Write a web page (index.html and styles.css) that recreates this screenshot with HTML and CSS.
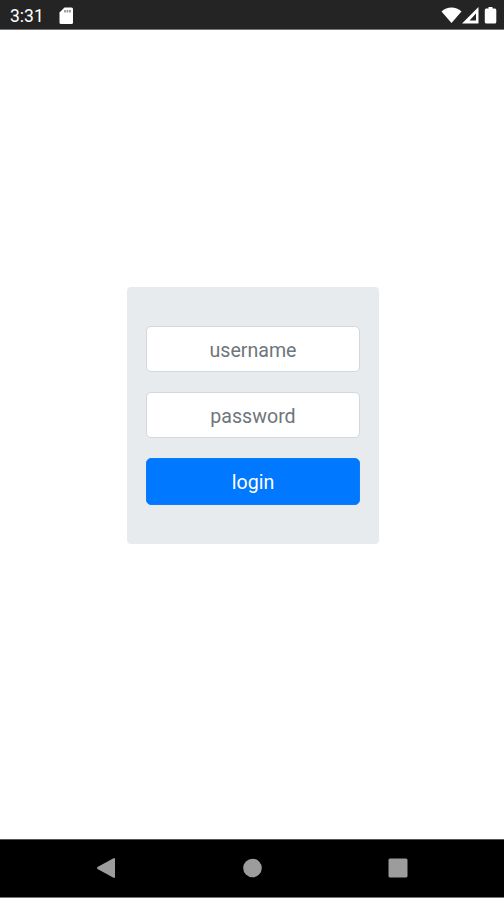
FILE: index.html
```html
<!DOCTYPE html>
<html lang="en">
<head>
<meta charset="utf-8">
<meta name="viewport" content="width=device-width, initial-scale=1">
<title>Login</title>
<link rel="stylesheet" href="styles.css">
</head>
<body>
<header class="status-bar">
  <span class="clock">3:31</span>
  <svg class="sd-card" width="15" height="18" viewBox="0 0 15 18" aria-hidden="true">
    <path fill="#fff" d="M5.500 .5h7q1.500 0 1.500 1.500v13.500q0 1.500-1.500 1.500h-10.500q-1.500 0-1.500-1.500V5.500z"/>
    <path stroke="#999" stroke-width="1.800" d="M6 3v2.500M8.500 3v2.500M11 3v2.500"/>
  </svg>
  <svg class="signals" width="58" height="20" viewBox="0 0 58 20" aria-hidden="true">
    <path fill="#fff" d="M.5 6.500C6 1 15 1 20.500 6.500L10.500 18z"/>
    <path fill="#fff" fill-rule="evenodd" d="M37.500 2v16.500H21zM35 8.500L28.500 15.500H35z"/>
    <path fill="#fff" d="M47.500 2h4v1.500H54q1.300 0 1.300 1.500v12q0 1.500-1.500 1.500h-8.500q-1.500 0-1.500-1.500V5q0-1.500 1.300-1.500h2.400z"/>
  </svg>
</header>
<main class="screen">
  <form class="card">
    <input class="field" type="text" placeholder="username" aria-label="username">
    <input class="field" type="password" placeholder="password" aria-label="password">
    <button class="login" type="button">login</button>
  </form>
</main>
<nav class="nav-bar">
  <svg width="20" height="22" viewBox="0 0 20 22" aria-label="Back"><path fill="#9c9c9c" d="M18 1q1 0 1 1v18q0 1-1 1L1.500 12q-1.200-1 0-2z"/></svg>
  <svg width="20" height="20" viewBox="0 0 20 20" aria-label="Home"><circle cx="10.500" cy="10" r="9.300" fill="#9c9c9c"/></svg>
  <svg width="20" height="20" viewBox="0 0 20 20" aria-label="Recent apps"><rect x=".5" y=".5" width="19" height="19" rx="1.500" fill="#9c9c9c"/></svg>
</nav>
</body>
</html>
```
FILE: styles.css
```css
* { box-sizing: border-box; }

body {
  margin: 0;
  height: 900px;
  display: flex;
  flex-direction: column;
  overflow: hidden;
  background: #fff;
  font-family: Roboto, "Liberation Sans", sans-serif;
}

.status-bar {
  height: 30px;
  flex: none;
  display: flex;
  align-items: center;
  padding: 0 5px 0 10px;
  background: #242424;
  border-bottom: 1px solid #777;
  color: #fff;
}

.clock {
  width: 49px;
  padding-top: 2px;
  font-size: 17.5px;
  line-height: 20px;
}

.sd-card { margin-top: 2px; }

.signals { margin-left: auto; margin-top: 1px; }

.screen {
  flex: 1;
  display: flex;
  flex-direction: column;
  align-items: center;
  padding: 257px 0 0 2px;
}

.card {
  width: 252px;
  height: 257px;
  display: flex;
  flex-direction: column;
  gap: 20px;
  padding: 39px 19px;
  background: #e8ebed;
  border-radius: 4px;
}

.field,
.login {
  width: 100%;
  height: 46px;
  flex: none;
  margin: 0;
  padding: 2px 0 0;
  border-radius: 5px;
  font-family: inherit;
  font-size: 19.6px;
  text-align: center;
}

.field {
  border: 1px solid #d2d7dc;
  background: #fff;
  color: #495057;
}

.field::placeholder { color: #6e757b; opacity: 1; }

.login {
  height: 47px;
  border: 1px solid #0d7cff;
  background: #0078ff;
  color: #fff;
}

.nav-bar {
  height: 59px;
  flex: none;
  display: grid;
  grid-template-columns: repeat(3, 146px);
  justify-content: center;
  justify-items: center;
  align-items: center;
  margin-bottom: 2px;
  padding-bottom: 1px;
  background: #000;
  border-top: 1px solid #555;
  border-bottom: 1px solid #777;
}
```
